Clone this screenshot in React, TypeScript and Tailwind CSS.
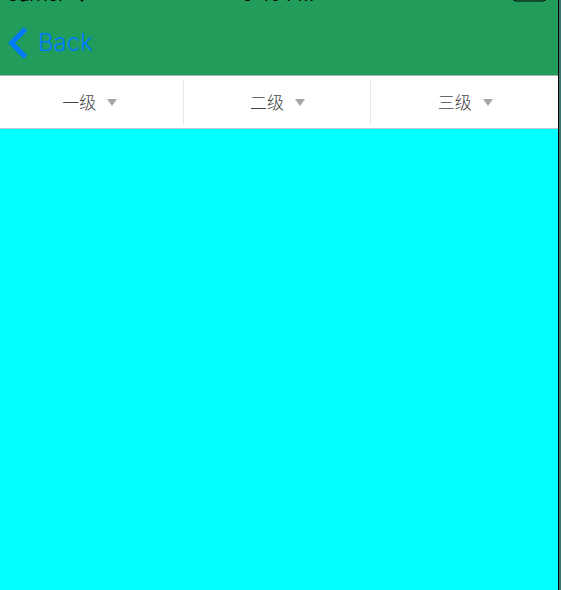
import { useState } from "react";

const levels = [
    { id: 1, title: "一级" },
    { id: 2, title: "二级" },
    { id: 3, title: "三级" },
];

const StatusBar = () => {
    return (
        <div className="flex h-[3px] items-end justify-between pl-[6px] pr-2 text-[18px] leading-4 text-black">
            <div className="flex flex-1 items-end gap-2">
                <span>Carrier</span>
                <svg className="mb-px" width="18" height="14" viewBox="0 0 18 14" fill="none" stroke="currentColor" strokeWidth="2">
                    <path d="M1 5a11.500 11.500 0 0 1 16 0M4 8.500a7 7 0 0 1 10 0" />
                    <path d="M6.500 11 9 14l2.500-3a3.500 3.500 0 0 0-5 0Z" fill="currentColor" stroke="none" />
                </svg>
            </div>
            <span>5:40 PM</span>
            <div className="flex flex-1 justify-end pb-px">
                <svg width="38" height="16" viewBox="0 0 38 16">
                    <rect x="1" y="1" width="33" height="14" rx="3" fill="none" stroke="#000" strokeWidth="1" />
                    <rect x="2" y="2" width="31" height="11" rx="1" fill="#000" />
                    <path d="M35.500 5.500v5a2.500 2.500 0 0 0 0-5Z" fill="#000" />
                </svg>
            </div>
        </div>
    )
}

const App = () => {
    const [active, setActive] = useState<number | null>(null);

  return (
    <div className="flex min-h-screen bg-[#3f7570] font-['Inter','Noto_Sans_CJK_SC',sans-serif]">
        <div className="flex flex-1 flex-col overflow-hidden border-r border-black bg-[#00ffff]">
            <header className="border-b border-[#a3b5aa] bg-[#229c5b]">
                <StatusBar />
                <nav className="flex h-[72px] items-center pl-2 pt-2">
                    <button type="button" className="flex items-center gap-[10px] text-[24px] leading-8 font-light text-[#007aff]">
                        <svg width="20" height="32" viewBox="0 0 20 32" fill="none" stroke="currentColor" strokeWidth="5">
                            <path d="M17.500 2 3.500 16l14 14" />
                        </svg>
                        <span>Back</span>
                    </button>
                </nav>
            </header>
            <div className="-ml-1 flex h-[53px] items-center border-b border-[#c8c8c8] bg-white">
                {levels.map(level=>(
                    <button
                        key={level.id}
                        type="button"
                        aria-pressed={active === level.id}
                        onClick={() => setActive(active === level.id ? null : level.id)}
                        className="flex h-11 flex-1 items-center justify-center gap-[11px] border-r border-[#e6e6e6] pl-px pt-px text-[17px] leading-6 font-light text-[#444444] last:border-r-0"
                    >
                        <span>{level.title}</span>
                        <svg width="10" height="7" viewBox="0 0 10 7" fill="#a6a6a6">
                            <path d="M0 0h10L5 7Z" />
                        </svg>
                    </button>
                ))}
            </div>
            <main className="flex-1" />
        </div>
        <div className="w-[2px]" />
    </div>
  )
}

export default App
